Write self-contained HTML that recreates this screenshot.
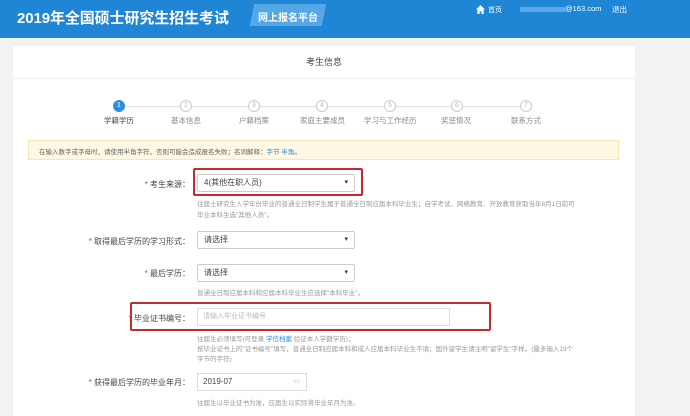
<!DOCTYPE html>
<html><head><meta charset="utf-8"><style>
*{margin:0;padding:0;box-sizing:border-box}
body{width:690px;height:406px;overflow:hidden;background:#f2f2f2;font-family:"Liberation Sans","Noto Sans CJK SC",sans-serif;position:relative;color:#555}
.a{position:absolute;white-space:nowrap}
.hd{position:absolute;left:0;top:0;width:690px;height:38px;background:#1f86d6}
.card{position:absolute;left:13px;top:46px;width:622px;height:370px;background:#fff}
.c{width:12px;height:12px;border-radius:50%;border:1px solid #ccc;color:#bbb;font-size:7px;text-align:center;line-height:10px;background:#fff}
.ln{position:absolute;height:1px;background:#e3e3e3;top:106px}
.sl{font-size:7.5px;color:#888}
.sel{position:absolute;border:1px solid #ccc;background:#fff;font-size:8px;color:#444;padding-left:6px;line-height:16px;height:18px;border-radius:2px}
.sel:after{content:"▾";position:absolute;right:6px;top:0;font-size:7px;color:#333}
.lab{font-size:8px;color:#444;text-align:right;width:180px}
.lab b{color:#e33;font-weight:normal}
.h{font-size:6.5px;color:#999}
.red{position:absolute;border:2px solid #c8292d;border-radius:2px}
</style></head><body>
<div class="hd"></div>
<div class="a" style="left:17px;top:7px;font-size:15px;font-weight:bold;color:#fff;letter-spacing:-0.1px">2019年全国硕士研究生招生考试</div>
<div class="a" style="left:252px;top:4px;width:72px;height:22px;background:#56a7e6;transform:skewX(-12deg)"></div>
<div class="a" style="left:258px;top:9px;font-size:10px;font-weight:bold;color:#fff">网上报名平台</div>
<svg class="a" style="left:476px;top:5px" width="9" height="9" viewBox="0 0 10 10"><path d="M5 0L0 5h1.5v5h2.5V7h2v3h2.5V5H10z" fill="#fff"/></svg>
<div class="a" style="left:488px;top:5px;font-size:7px;color:#fff">首页</div>
<div class="a" style="left:520px;top:7px;width:45px;height:5px;background:#5aa8ea"></div>
<div class="a" style="left:565px;top:4px;font-size:7.5px;color:#fff">@163.com</div>
<div class="a" style="left:612px;top:4px;font-size:7.5px;color:#fff">退出</div>
<div class="card"></div>
<div class="a" style="left:13px;top:78px;width:622px;height:1px;background:#eee"></div>
<div class="a" style="left:306px;top:55px;font-size:9px;color:#444">考生信息</div>
<div class="ln" style="left:125px;width:396px"></div>
<div class="a c" style="left:113px;top:100px;background:#2d8ee0;border-color:#2d8ee0;color:#fff">1</div>
<div class="a c" style="left:180px;top:100px">2</div>
<div class="a c" style="left:248px;top:100px">3</div>
<div class="a c" style="left:316px;top:100px">4</div>
<div class="a c" style="left:384px;top:100px">5</div>
<div class="a c" style="left:451px;top:100px">6</div>
<div class="a c" style="left:520px;top:100px">7</div>
<div class="a sl" style="left:104px;top:115px;color:#444">学籍学历</div>
<div class="a sl" style="left:171px;top:115px">基本信息</div>
<div class="a sl" style="left:239px;top:115px">户籍档案</div>
<div class="a sl" style="left:300px;top:115px">家庭主要成员</div>
<div class="a sl" style="left:364px;top:115px">学习与工作经历</div>
<div class="a sl" style="left:441px;top:115px">奖惩情况</div>
<div class="a sl" style="left:511px;top:115px">联系方式</div>
<div class="a" style="left:28px;top:140px;width:591px;height:20px;background:#fcf8e3;border:1px solid #f5e7b8"></div>
<div class="a" style="left:39px;top:146px;font-size:6.5px;color:#666">在输入数字或字母时，请使用半角字符，否则可能会造成报名失败；名词解释：<span style="color:#2d8ee0">字节 半角</span>。</div>
<div class="a lab" style="left:10px;top:179px"><b>* </b>考生来源：</div>
<div class="sel" style="left:197px;top:174px;width:158px">4(其他在职人员)</div>
<div class="red" style="left:193px;top:168px;width:170px;height:28px"></div>
<div class="a h" style="left:197px;top:198px">往届士研究生入学年份毕业的普通全日制学生属于普通全日制应届本科毕业生；自学考试、网络教育、开放教育获取当年8月1日前可</div>
<div class="a h" style="left:197px;top:209px">毕业本科生选"其他人员"。</div>
<div class="a lab" style="left:10px;top:236px"><b>* </b>取得最后学历的学习形式：</div>
<div class="sel" style="left:197px;top:231px;width:158px">请选择</div>
<div class="a lab" style="left:10px;top:268px"><b>* </b>最后学历：</div>
<div class="sel" style="left:197px;top:264px;width:158px">请选择</div>
<div class="a h" style="left:197px;top:287px">普通全日制应届本科和应届本科毕业生应选择"本科毕业"。</div>
<div class="a lab" style="left:10px;top:313px"><b>* </b>毕业证书编号：</div>
<div class="a" style="left:197px;top:308px;width:253px;height:18px;border:1px solid #ddd;font-size:7px;color:#bbb;padding-left:5px;line-height:16px">请输入毕业证书编号</div>
<div class="red" style="left:130px;top:302px;width:361px;height:29px"></div>
<div class="a h" style="left:197px;top:333px">往届生必须填写(可登录 <span style="color:#2d8ee0">学信档案</span> 验证本人学籍学历)；</div>
<div class="a h" style="left:197px;top:343px">按毕业证书上的"证书编号"填写，普通全日制应届本科和成人应届本科毕业生不填；国外留学生请注明"留学生"字样。(最多输入19个</div>
<div class="a h" style="left:197px;top:353px">字节的字符)</div>
<div class="a lab" style="left:10px;top:377px"><b>* </b>获得最后学历的毕业年月：</div>
<div class="a" style="left:197px;top:373px;width:110px;height:18px;border:1px solid #ddd;font-size:8px;color:#444;padding-left:5px;line-height:16px">2019-07<span style="position:absolute;right:6px;top:0;color:#bbb;font-size:7px">▭</span></div>
<div class="a h" style="left:197px;top:397px">往届生以毕业证书为准，应届生以实际将毕业年月为准。</div>
</body></html>
